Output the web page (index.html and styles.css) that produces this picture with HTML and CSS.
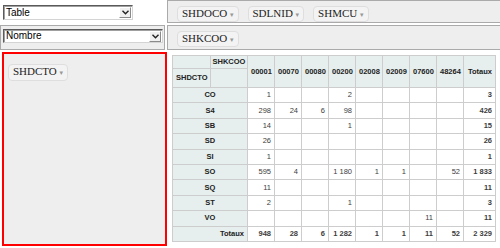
FILE: index.html
```html
<!DOCTYPE html>
<html lang="fr">
<head>
    <meta charset="UTF-8">
    <title>Tableau croisé</title>
    <link rel="stylesheet" href="styles.css">
</head>
<body>
    <div class="pvt-ui">
        <div class="cell renderers">
            <div class="fake-select sel-renderer">
                <span class="sel-text">Table</span>
                <span class="sel-btn"><svg width="7" height="5" viewBox="0 0 7 5"><path d="M0.5 0.8 L3.5 3.8 L6.5 0.8" fill="none" stroke="#222" stroke-width="1.4"/></svg></span>
            </div>
        </div>
        <div class="cell axis unused">
            <span class="attr">SHDOCO <span class="tri">&#9662;</span></span>
            <span class="attr">SDLNID <span class="tri">&#9662;</span></span>
            <span class="attr">SHMCU <span class="tri">&#9662;</span></span>
        </div>

        <div class="cell axis vals">
            <div class="fake-select sel-agg">
                <span class="sel-text">Nombre</span>
                <span class="sel-btn"><svg width="7" height="5" viewBox="0 0 7 5"><path d="M0.5 0.8 L3.5 3.8 L6.5 0.8" fill="none" stroke="#222" stroke-width="1.4"/></svg></span>
            </div>
        </div>
        <div class="cell axis cols">
            <span class="attr">SHKCOO <span class="tri">&#9662;</span></span>
        </div>

        <div class="cell axis rows">
            <span class="attr">SHDCTO <span class="tri">&#9662;</span></span>
        </div>
        <div class="cell renderer-area">
            <table class="pvt-table">
                <colgroup>
                    <col class="c-head"><col class="c-head2">
                    <col class="c-val"><col class="c-val"><col class="c-val"><col class="c-val">
                    <col class="c-val"><col class="c-val"><col class="c-val"><col class="c-val">
                    <col class="c-total">
                </colgroup>
                <thead>
                    <tr class="h1">
                        <th></th>
                        <th class="axis-label">SHKCOO</th>
                        <th class="col-label" rowspan="2">00001</th>
                        <th class="col-label" rowspan="2">00070</th>
                        <th class="col-label" rowspan="2">00080</th>
                        <th class="col-label" rowspan="2">00200</th>
                        <th class="col-label" rowspan="2">02008</th>
                        <th class="col-label" rowspan="2">02009</th>
                        <th class="col-label" rowspan="2">07600</th>
                        <th class="col-label" rowspan="2">48264</th>
                        <th class="total-label" rowspan="2">Totaux</th>
                    </tr>
                    <tr class="h2">
                        <th class="axis-label">SHDCTO</th>
                        <th></th>
                    </tr>
                </thead>
                <tbody>
                    <tr><th class="row-label" colspan="2">CO</th><td>1</td><td></td><td></td><td>2</td><td></td><td></td><td></td><td></td><td class="total">3</td></tr>
                    <tr><th class="row-label" colspan="2">S4</th><td>298</td><td>24</td><td>6</td><td>98</td><td></td><td></td><td></td><td></td><td class="total">426</td></tr>
                    <tr><th class="row-label" colspan="2">SB</th><td>14</td><td></td><td></td><td>1</td><td></td><td></td><td></td><td></td><td class="total">15</td></tr>
                    <tr><th class="row-label" colspan="2">SD</th><td>26</td><td></td><td></td><td></td><td></td><td></td><td></td><td></td><td class="total">26</td></tr>
                    <tr><th class="row-label" colspan="2">SI</th><td>1</td><td></td><td></td><td></td><td></td><td></td><td></td><td></td><td class="total">1</td></tr>
                    <tr><th class="row-label" colspan="2">SO</th><td>595</td><td>4</td><td></td><td>1 180</td><td>1</td><td>1</td><td></td><td>52</td><td class="total">1 833</td></tr>
                    <tr><th class="row-label" colspan="2">SQ</th><td>11</td><td></td><td></td><td></td><td></td><td></td><td></td><td></td><td class="total">11</td></tr>
                    <tr><th class="row-label" colspan="2">ST</th><td>2</td><td></td><td></td><td>1</td><td></td><td></td><td></td><td></td><td class="total">3</td></tr>
                    <tr><th class="row-label" colspan="2">VO</th><td></td><td></td><td></td><td></td><td></td><td></td><td>11</td><td></td><td class="total">11</td></tr>
                    <tr class="grand"><th class="total-label" colspan="2">Totaux</th><td class="total">948</td><td class="total">28</td><td class="total">6</td><td class="total">1 282</td><td class="total">1</td><td class="total">1</td><td class="total">11</td><td class="total">52</td><td class="total">2 329</td></tr>
                </tbody>
            </table>
        </div>
    </div>
</body>
</html>
```

FILE: styles.css
```css
body {
    margin: 0;
    padding: 0;
    background: #fff;
    color: #333;
    font-family: "Liberation Serif", "Times New Roman", serif;
}
.pvt-ui {
    display: grid;
    grid-template-columns: 167px 333px;
    grid-template-rows: 23px 25px 194px;
    row-gap: 2px;
    width: 500px;
}
.cell {
    box-sizing: border-box;
}
.axis {
    background: #eee;
    border: 1px solid #aaa;
}
.renderers {
    padding: 5px 0 0 3px;
}
.unused {
    padding: 2px 0 0 9px;
    border-right: none;
}
.vals {
    margin-right: 2px;
    padding: 3px 0 0 2px;
}
.cols {
    padding: 2px 0 0 9px;
    border-right: none;
}
.rows {
    margin-left: 2px;
    border: 2px solid #f00;
    padding: 7px 0 0 4px;
}
.renderer-area {
    padding: 3px 0 0 5px;
}

/* attribute pills */
.attr {
    display: inline-block;
    background: #f3f3f3;
    border: 1px solid #dedede;
    border-radius: 4px;
    padding: 0 4px;
    margin-right: 5px;
    font-size: 11px;
    line-height: 12px;
    color: #222;
    white-space: nowrap;
}
.rows .attr {
    line-height: 13px;
}
.tri {
    font-family: "DejaVu Sans", sans-serif;
    font-size: 7px;
    color: #999;
}

/* old style selects */
.fake-select {
    display: flex;
    align-items: center;
    box-sizing: border-box;
    height: 15px;
    background: #fff;
    border: 1px solid;
    border-color: #5a5a5a #d4d4d4 #d4d4d4 #5a5a5a;
    box-shadow: inset 1px 1px 0 #a0a0a0;
    font-family: "Liberation Sans", Arial, sans-serif;
    font-size: 10px;
    color: #000;
}
.sel-renderer {
    width: 130px;
}
.sel-agg {
    width: 160px;
    height: 14px;
}
.sel-text {
    flex: 1;
    padding-left: 2px;
    line-height: 12px;
}
.sel-btn {
    display: flex;
    align-items: center;
    justify-content: center;
    box-sizing: border-box;
    width: 12px;
    height: 11px;
    margin-right: 1px;
    background: #f0f0f0;
    border: 1px solid;
    border-color: #fff #8a8a8a #8a8a8a #fff;
}

/* pivot table */
.pvt-table {
    border-collapse: collapse;
    table-layout: fixed;
    width: 323px;
    font-family: "Liberation Sans", Arial, sans-serif;
    font-size: 7.5px;
}
.c-head { width: 38px; }
.c-head2 { width: 37px; }
.c-val { width: 27px; }
.c-total { width: 32px; }
.pvt-table th,
.pvt-table td {
    border: 1px solid #cdcdcd;
    padding: 0 3px;
    line-height: 10px;
    white-space: nowrap;
    overflow: hidden;
}
.pvt-table th {
    background: #e6eeee;
    color: #222;
    font-weight: bold;
}
.pvt-table td {
    background: #fff;
    color: #3d3d3d;
    text-align: right;
}
.pvt-table .h1 { height: 13px; }
.pvt-table .h2 { height: 19px; }
.pvt-table tbody tr { height: 15.4px; }
.axis-label {
    text-align: left;
}
.pvt-table .h1 .axis-label {
    text-align: center;
    padding: 0;
}
.col-label {
    text-align: center;
}
.total-label {
    text-align: right;
}
.row-label {
    text-align: center;
}
.pvt-table td.total {
    font-weight: bold;
}
```
